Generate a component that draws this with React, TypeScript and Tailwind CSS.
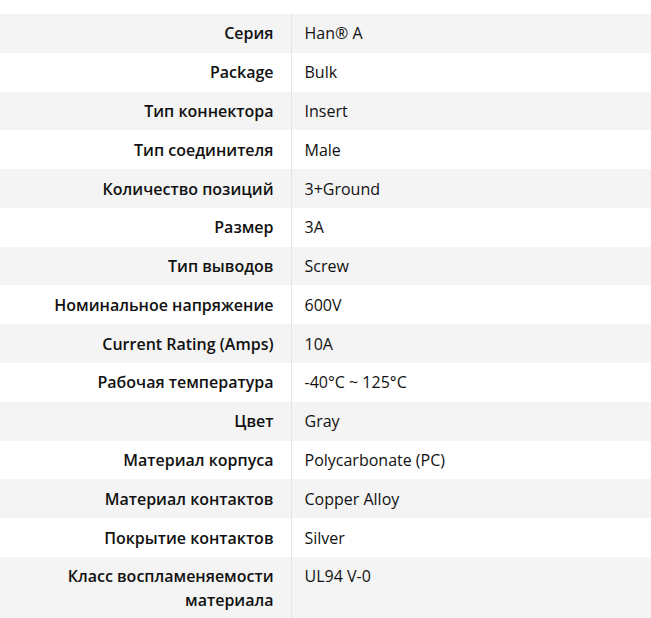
const rows: [string, string][] = [
  ["Серия", "Han® A"],
  ["Package", "Bulk"],
  ["Тип коннектора", "Insert"],
  ["Тип соединителя", "Male"],
  ["Количество позиций", "3+Ground"],
  ["Размер", "3A"],
  ["Тип выводов", "Screw"],
  ["Номинальное напряжение", "600V"],
  ["Current Rating (Amps)", "10A"],
  ["Рабочая температура", "-40°C ~ 125°C"],
  ["Цвет", "Gray"],
  ["Материал корпуса", "Polycarbonate (PC)"],
  ["Материал контактов", "Copper Alloy"],
  ["Покрытие контактов", "Silver"],
  ["Класс воспламеняемости материала", "UL94 V-0"],
];

export default function App() {
  return (
    <div className="w-[651px] h-[618px] overflow-hidden bg-white pt-[14px] font-['Open_Sans',sans-serif] text-[16px] leading-6 text-[#111]">
      <table className="w-full border-collapse">
        <tbody>
          {rows.map(([label, value], i) => (
            <tr key={label} className={i % 2 === 0 ? "bg-[#f4f4f4]" : "bg-white"}>
              <th className="w-[291px] border-r border-[#e4e4e4] py-[7.4px] pr-[17px] pl-4 text-right align-top font-semibold">
                {label}
              </th>
              <td className="py-[7.4px] pl-[13px] pr-4 text-left align-top font-normal">
                {value}
              </td>
            </tr>
          ))}
        </tbody>
      </table>
    </div>
  );
}
